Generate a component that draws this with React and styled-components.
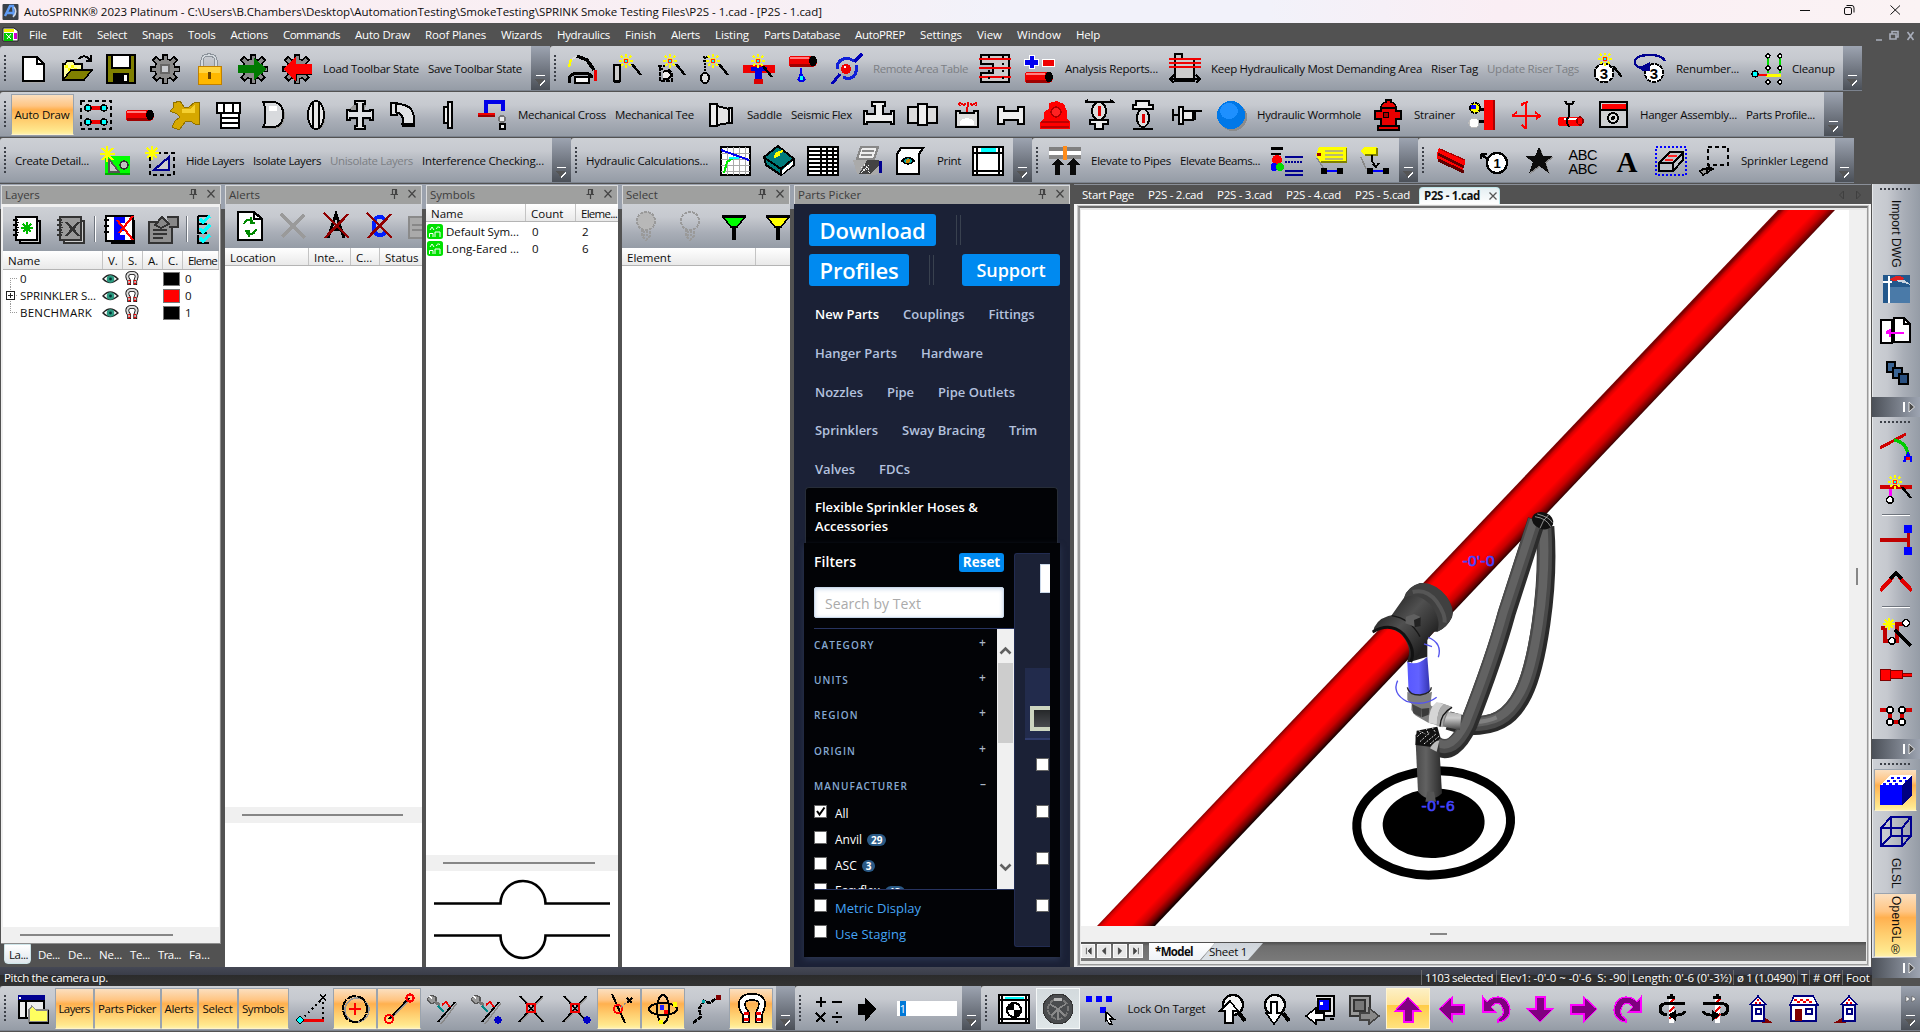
import React, { useLayoutEffect, useRef, useState } from "react";
import styled, { createGlobalStyle, css } from "styled-components";

const Global = createGlobalStyle`
  * { box-sizing: border-box; }
  body { margin: 0; background: #525252; overflow: hidden; }
  #root { font-family: "Open Sans", "Noto Sans", sans-serif; font-size: 11.5px; color: #0c0c0c; }
`;

/* ---------- text that is spaced to fill a given width ---------- */
const FitSpan = styled.span`
  display: inline-block;
  flex: none;
  width: max-content;
  white-space: pre;
`;
function Fit({ w, children }) {
  const ref = useRef(null);
  const [gap, setGap] = useState(0);
  useLayoutEffect(() => {
    const natural = ref.current.getBoundingClientRect().width;
    setGap((w - natural) / String(children).length);
  }, [w, children]);
  return (
    <FitSpan ref={ref} style={{ letterSpacing: gap }}>
      {children}
    </FitSpan>
  );
}

/* ---------- icon drawings: [path, fill, stroke, width, dash] ---------- */
const N = "none";
const K = "#000";
const R = "#f00000";
const c = (x, y, r, q = r) => `M${x - r} ${y}A${r} ${q} 0 1 1 ${x + r} ${y}A${r} ${q} 0 1 1 ${x - r} ${y}Z`;
const spark = (x, y) => [
  [`M${x} ${y - 7}V${y + 7}M${x - 7} ${y}H${x + 7}M${x - 5} ${y - 5}L${x + 5} ${y + 5}M${x + 5} ${y - 5}L${x - 5} ${y + 5}`, N, "#ff0", 1.6, "2.5 1.2"],
  [`M${x - 2} ${y - 2}h4v4h-4z`, "#f22"],
  [`M${x - 1} ${y - 1}h2v2h-2z`, "#0ff"],
];
const wand = (x, y) => [[`M${x} ${y}L${x + 9} ${y + 11}`, N, K, 2.4]];
const gear = [
  ["M16 1V31M1 16H31M5 5L27 27M27 5L5 27", N, K, 6],
  [c(16, 16, 10), "#8a8a8a", K, 1.6],
  ["M16 2.5V29.5M2.5 16H29.5M6.5 6.5L25.5 25.5M25.5 6.5L6.5 25.5", N, "#8a8a8a", 3],
];
const mag = [
  ["M11 30V21L8 16Q4 4 17 4Q30 4 26 16L24 21V30", N, K, 8],
  ["M11 28.5V21L8 16Q4 4 17 4Q30 4 26 16L24 21V28.5", N, "#fff", 4.6],
  ["M9 19h5v3h-5zM21 19h5v3h-5zM9 25h5v3h-5zM21 25h5v3h-5z", R],
];
const pipe = (y) => [[`M3 ${y - 5}H25A5 5 0 0 1 25 ${y + 6}H3Q0 ${y} 3 ${y - 5}Z`, R], [`M3 ${y + 3}H26V${y + 6}H3Z`, "#a00000"], [`M3 ${y - 3}H22`, N, "#ff8080", 1.5], [c(26, y, 4, 5), K]];
const num3 = [[c(14, 20, 9.5), "#fff", K, 2, "4 1"], ["T", 14, 25.5, "3", 15, 700]];
const bulb = (f) => [[c(16, 11, 9, 9), f, "#9a9a9a", 2, "3 1"], ["M12 19V26L16 30L20 26V19", N, "#9a9a9a", 2, "3 1"], ["M13 22H19M13 25H19", N, "#9a9a9a", 1.5, "2 1"]];
const funnel = (f) => [["M5 7H27L19 17H13Z", f, K, 1.5], ["M4 6H28", N, K, 2], ["M16 17V30", N, K, 4]];
const page = (f, s = K) => [["M9 8H29V30H9Z", "#ccc", s, 1.5], ["M5 4H26V27H5Z", f, s, 2], ["M2 7H7M2 12H7M2 17H7M2 22H7", N, s, 2], ["M5 9.5H8M5 14.5H8M5 19.5H8", N, s, 1.5]];
const arr = (d) => [[d, "#c8c8c8"], [d, "#800080", "#ff00ff", 1.2]];
const house = (x) => [[`M${x} 12L${x + 8} 3L${x + 16} 12`, "#fff", "#000080", 1.5], [`M${x + 5} 9h2v2h-2zM${x + 9} 9h2v2h-2zM${x + 7} 6h2v2h-2z`, R], [`M${x + 2} 12H${x + 14}V28H${x + 2}Z`, "#fff", "#000080", 2], [`M${x + 6} 16h5v5h-5z`, "#fff", "#000080", 1.8]];
const tick = (x) => [["M30 10L14 31", N, "#888", 1.4], ["M28 9L11 29", N, K, 1.8], ["M4 2l5 2v5l-5 2-4-5z", "#999", "#555", 1.2], ["M2 3l3 1v3z", "#fff"], ["M8 9l5 3", N, "#777", 3], ["M11 13L17 19", N, "#088", 2], ["M15 12l4-3 4 5", N, R, 1.8], x ? [c(27, 27, 3.6), "#0000c8"] : ["M0 0"]];
const cross = (x) => [["M7 4L29 29M28 4L6 29", N, "#999", 1.4], ["M5 3L28 29M27 3L4 29", N, K, 1.7], ["M12 11h8v8h-8z", N, R, 2], x ? [c(28, 27, 3.6), "#0000c8"] : ["M0 0"]];

const ART = {
  new: [["M7 5H22L28 11V30H7Z", "#aaa"], ["M6 4H20L27 11V28H6Z", "#fff", K, 2], ["M20 4V11H27", N, K, 1.6]],
  open: [["M2 27V11H4L6 8H12L14 11H21V27Z", "#ffff9c", K, 1.6], ["M4 12h3v3h-3zM10 12h3v3h-3zM7 15h3v3h-3zM13 15h3v3h-3z", "#ffff00"], ["M2 27L10 17H31L23 27Z", "#808000", K, 1.6], ["M18 6Q23 0 29 7M30 2V8H25", N, K, 2]],
  save: [["M2 2H30V30H2Z", "#808000", K, 2], ["M7 2H25V15H7Z", "#fff", K, 1.5], ["M8 20H24V30H8Z", K], ["M19 22H22V28H19Z", "#fff"]],
  gear: [...gear, ["M11 11h10v10h-10z", "#666"], ["M13 13h6v6h-6z", "#c8cbd0"]],
  lock: [["M9 15V8Q9 2 16 2Q23 2 23 8V15", N, "#8b929a", 3.4], ["M9 15V8Q9 2 16 2Q23 2 23 8V15", N, "#d5dbe0", 1.2], ["M5 13H28V31H5Z", "#ffb800", "#c08000", 1], ["M6 14H27V20H6Z", "#ffd440"], ["M15 19h3v7h-3z", "#6a4300"]],
  gearG: [...gear, ["M1 12H17V5L30 16L17 27V20H1Z", "#007a00"]],
  gearR: [...gear, ["M31 11H15V4L2 16L15 28V21H31Z", "#f00"], ["M31 21H15V28", N, K, 1]],
  auto: [["M2 14L4 6", N, "#ff0", 2.4], ["M5 6L11 3", N, "#ddd", 2], ["M10 3L20 7L27 17", N, K, 3.5], ["M2 30V25Q5 20 11 20H18Q25 21 25 25", N, K, 3], ["M8 24H22V30H8Z", "#f8f8f8", K, 2], ["M27 17h3v11h-3z", "#e00"]],
  probe: [["M3 12h6v16h-6z", "#ccc", K, 2.4], ["M3 29h6", N, K, 2], ...spark(15, 8), ...wand(21, 11)],
  wiz2: [["M3 13H10M4 16H8M5 14V28H17V20L13 16", N, K, 2, "4 1"], ["M8 19q6-3 8 3q-2 6-8 4", "#eee", K, 2], ...spark(15, 8), ...wand(21, 11)],
  wiz3: [["M4 4h5M4 8h5M6 4v14", N, K, 2, "2 1"], [c(6, 25, 4, 5), "#ddd", K, 2], ...spark(14, 8), ...wand(20, 11)],
  wiz4: [["M0 12H32V20H0Z", R], ["M8 14H24V18H19V26H12V18H8Z", "#0000e0"], ["M11 26h9v5h-9z", "#d00"], ...spark(15, 8), ...wand(20, 13)],
  drip: [...pipe(8), ["M14 15V20", N, "#00f", 2], ["M14 18L19 27Q15 32 10 27Z", "#0000e8"], ["M13 23h3v4h-3z", "#0ff"]],
  orbit: [["M1 31L9 21M23 9L31 1", N, "#0000b8", 3], ["M6 16Q6 6 17 5L23 8M25 12Q27 24 17 26L12 24", N, "#1020d8", 3], [c(15, 16, 5), R], [c(14, 14, 1.5), "#fff"]],
  frame: [["M2 2H30V29H2V20H14V11H2Z", "#ccc", K, 2], ["M0 6H32M0 15H32M0 24H32", N, R, 2], ["M10 3V29M24 3V29", N, K, 1.4, "2 5"]],
  plus: [["M6 2H11V6H15V12H11V15H6V12H1V6H6Z", "#0000f0", "#fff", 1], ["M19 6H31V13H19Z", R, "#fff", 1], ...pipe(24)],
  keep: [["M6 1H13V6H25V28H6Z", "#ccc", K, 2], ["M0 6H32M0 10H32M0 14H32", N, R, 2], ["M2 26H30M5 22L1 26L5 30M27 22L31 26L27 30", N, K, 2.5]],
  renum1: [...num3, ...spark(15, 6), ...wand(23, 13)],
  renum2: [[c(20, 20, 9), "#fff", K, 2, "4 1"], ["T", 20, 25.5, "3", 15, 700], ["M31 8Q28 2 16 2Q1 2 1 9Q1 14 8 15", N, "#000090", 2.4], ["M6 14L16 9V18H8Z", "#000090"]],
  cleanup: [["M18 5V20M30 5V20", N, "#0d0", 2], ["M16 22H31", N, "#ff0", 3], ["M6 22H17", N, "#f00", 2.5], [c(5, 21, 3), "#0ff", K, 1.2], [c(18, 3, 2), "#fff", K, 1.2], [c(30, 3, 2), "#fff", K, 1.2], [c(18, 15, 2), "#fff", K, 1.2], [c(30, 15, 2), "#fff", K, 1.2], [c(18, 29, 2), "#fff", K, 1.2], [c(30, 29, 2), "#fff", K, 1.2]],

  sel: [["M1 2H31V30H1Z", N, K, 2, "4 3"], ["M9 9H23M9 23H23", N, "#e00", 3.5], [c(8, 9, 3), "#0ff", K, 1.4], [c(24, 9, 3), "#0ff", K, 1.4], [c(8, 23, 3), "#0ff", K, 1.4], [c(24, 23, 3), "#0ff", K, 1.4]],
  pipe: pipe(16),
  ytee: [["M5 4L12 2L16 8H21L27 3H31V25H27L22 22H18L11 31L4 28L7 22L12 18L9 15L2 12L5 9Z", "#d6a800", "#8f7000", 1], ["M14 10H22L27 6V14H14Z", "#f5d030"]],
  cap: [["M5 4H28V14H5Z", "#fff", K, 2], ["M12 4V14M21 4V14", N, K, 2], ["M9 14H27V29H9Z", "#fff", K, 2], ["M9 19H27M9 24H27", N, K, 2]],
  plug: [["M9 5H20Q30 8 29 18Q28 28 20 30H9", "#999"], ["M7 3H19Q28 6 27 16Q27 26 19 28H7L9 24V8Z", "#d8dadd", K, 2], ["M13 7H21V12H13Z", "#fff"]],
  disc: [[c(18, 17, 7.5, 14), "#999"], [c(16, 16, 8, 14), "#e8e8e8", K, 2], ["M13 4V28M19 4V28", N, K, 1.5]],
  crossf: [["M12 3H22V6L20 13H27L30 12V22L20 21V28L22 31H12V21H4V12Z", "#999"], ["M11 2H21V5H19V12H26V11H29V21H26V19H19V27H21V30H11V27H13V19H6V21H3V11H6V12H13V5H11Z", "#e2e3e5", K, 2]],
  elbow: [["M3 4H9V5Q25 5 26 19V27H15V22Q15 14 9 14V16H3Z", "#e2e3e5", K, 2], ["M13 25H27M8 5V14", N, K, 2]],
  flange: [["M12 8H16V24H12ZM16 3H20V29H16Z", "#eee", K, 1.8]],
  hook: [["M10 15V3H27V12", N, "#0000e8", 4], ["M2 14H19V18H2Z", R], ["M2 17H19", N, "#900", 2.5], [c(26, 20, 3), "#eee", "#777", 1.5], ["M24 25h5v5h-5z", "#eee", K, 1.5]],
  reducer: [["M5 5H12V27H5Z", "#eee", K, 2], ["M12 7L24 10V24L12 26Z", "#e4e4e4", K, 2], ["M24 9h3v15h-3z", "#eee", K, 1.6]],
  tee: [["M9 3H22V7H20V15H28V12H31V25H28V23H4V25H1V12H4V15H12V7H9Z", "#eee", K, 2]],
  coup: [["M1 8H12V24H1Z", "#ddd", K, 2], ["M20 8H30V24H20Z", "#ddd", K, 2], ["M11 5H20V26H11Z", "#eee", K, 2]],
  flow: [["M7 5H26M9 3V7M13 5V8M17 3V8M21 5V8M25 3V7", N, "#e00", 1.8, "2 1"], ["M16 8V13", N, "#e00", 2], ["M5 12H9V14H23V12H27V28H5Z", "#ddd", K, 2], ["M9 22Q16 16 23 22V26H9Z", "#fff"]],
  red2: [["M3 8H9V12H23V8H29V25H23V21H9V25H3Z", "#eee", K, 2]],
  riser: [["M10 4L18 2L25 5L28 12V20L31 23V30H1V23L5 20V13L10 10Z", "#f00"], [c(17, 13, 5), "#f22", "#a00", 1.5], ["M2 23H30M2 28H30", N, "#b00", 1.5]],
  head1: [["M2 3H30L27 1M5 1L2 3", N, K, 2], [c(16, 12, 7, 9), "#ddd", K, 2], ["M15 7h3v10h-3z", "#d00"], ["M7 21H25V25H20V30H12V25H7Z", "#eee", K, 2]],
  head2: [["M9 2H22V6H26V10H6V6H9Z", "#eee", K, 2], [c(16, 19, 6, 9), "#ddd", K, 2], ["M15 15h3v9h-3z", "#d00"], ["M6 30H26", N, K, 2.4]],
  side: [["M2 10V22M2 16H9", N, K, 2.4], ["M8 8H12V25H8Z", "#eee", K, 2], ["M12 12H22V21H12Z", "#eee", K, 2], ["M22 12H31M24 12V21", N, K, 2]],
  ball: [[c(18, 18, 14, 14), "#8c8c8c"], [c(16, 16, 14, 14), "#0078e8"], [c(14, 12, 9, 8), "#1e90ff"]],
  hydrant: [["M9 9Q9 4 14 3V1H19V3Q24 4 24 9V12H29V20H24V27H27V31H6V27H9V20H3V12H9Z", "#e80000", K, 1.6], [c(14, 16, 3), "#a00", K, 1], ["M8 9H25M8 27H25", N, K, 1.6]],
  hazard: [["M18 1H27V31H18Z", "#f00"], ["M27 1h2v30h-2z", "#a00"], [c(9, 9, 5), "#ff0", K, 2, "3 1"], ["M5 6h5v4h-5z", "#00f"], [c(8, 24, 5), "#fff", "#bbb", 1.2], ["M13 10H18M13 22H18", N, K, 3]],
  move: [["M16 3V30M3 17H30", N, "#f00", 2], ["M12 7V5L18 3M25 13L30 17L26 20M7 13L2 17M16 30L12 26", N, "#f00", 2]],
  hanger: [["M11 2L13 5H18L20 2M15 5V18", N, K, 2.2], ["M5 18H28V27H5Q2 23 5 18Z", "#f00"], ["M10 20H24", N, "#fff", 2], [c(26, 22, 3, 4), "#f00", "#800", 1.5], ["M15 17Q11 22 15 28", N, K, 2]],
  win: [["M2 3H29V28H2Z", "#cfd0d2", K, 2.4], ["M3.5 5H28V10H3.5Z", "#f00"], ["M2 10.5H29", N, K, 2], [c(15, 19, 5), "#ddd", K, 2], [c(15, 19, 2), K]],

  detail: [["M5 11H30V30H5Z", "#0f0"], ["M5 29H30", N, "#0a0", 2], ["M9 14V27H19L9 14", "#c8c8c8", "#555", 1.6], [c(24, 20, 4), "#c0c0c0", "#333", 1.5], ["M7 1V17M0 9H15M2 3L13 15M13 3L2 15", N, "#ff0", 2]],
  detail2: [["M6 8H30V30H6Z", N, K, 2.4, "4 3"], ["M10 25L25 12V25Z", "#ccc", "#000090", 2.2], ["M8 1V15M1 8H15M3 3L13 13M13 3L3 13", N, "#ff0", 2]],
  graph: [["M2 2H31V30H2Z", "#fff", K, 2], ["M8 2V30M14 2V30M20 2V30M26 2V30M2 8H31M2 14H31M2 20H31M2 26H31", N, "#aaa", 1], ["M2 5L30 15", N, "#00e", 2], ["M5 28L8 17L14 13", N, "#0e0", 2], ["M10 13H20", N, "#0ff", 2]],
  book: [["M1 12L15 1L31 14V20L18 30L3 20Z", "#007c7c", K, 2], ["M2 13L18 24V29M18 24L30 14", N, K, 2], ["M19 25L30 16V20L19 29Z", "#fff"], ["M12 9L20 6M11 12L17 9", N, "#ff0", 2.4]],
  table: [["M1 2H31V30H1Z", "#fff", K, 2.4], ["M1 6H31M1 10H31M1 14H31M1 18H31M1 22H31M1 26H31M14 2V30M20 2V30M26 2V30", N, K, 1.8]],
  printer: [["M10 2H27L23 14H6Z", "#eee", "#888", 2], ["M11 6H23M10 10H21", N, "#888", 1.5], ["M2 15H25L31 17V26L24 30L6 29Z", "#aaa"], ["M8 29L16 15H28V20L20 29Z", "#444"], ["M10 22l4 4M13 19l5 6M18 20l-8 8M15 24l4 4", N, "#eee", 1.2, "2 1"], ["M29 16V28", N, "#000090", 3]],
  preview: [["M6 3H28L24 9V29H2V9Z", "#fff", K, 2], ["M7 16Q13 9 19 16Q13 22 7 16Z", "#0aa", K, 1.6], [c(13, 16, 2), "#c80"]],
  sheet: [["M1 2H31V30H1Z", "#fff", K, 2.2], ["M5 2V30M27 2V30M1 8H31M1 26H31", N, K, 2], ["M9 3.2H24V7H9Z", "#0ff"]],
  elev: [["M0 2H32V6H0Z", "#808080"], ["M0 6H32V10H0Z", "#fff"], ["M0 10H32V14H0Z", "#888"], ["M14 1H18V15H14Z", "#ff8c1a"], ["M2 20L9 13L15 20H11V30H6V20ZM17 20L24 13L31 20H27V30H21V20Z", "#0a0a0a"]],
  rgb: [["M0 2h12v3h-12zM0 8h10v2h-10z", K], [c(6, 15, 5), "#f00"], [c(3, 22, 4), "#00f"], [c(9, 22, 4), "#0d0"], ["M14 12H32M14 26H32M14 30H32", N, "#000090", 2.4], ["M14 17H32", N, "#000090", 2, "2 1"]],
  tag1: [["M4 2H32V17H5L1 10Z", "#ff0"], ["M6 17H32V3", N, "#808000", 2], ["M10 6H28M10 10H28M10 14H28", N, "#b8b870", 1.5], ["M2 8h4v3h-4z", "#900"], ["M2 13L9 24", N, "#888", 1.5], ["M9 26H27", N, "#00f", 2.4], ["M6 23h6v6h-6zM22 23h6v6h-6z", K]],
  tag2: [["M5 2H18V10H5L2 6Z", "#ff0"], ["M18 3V10H6", N, "#808000", 2], ["M13 10V16L17 22M14 19L17 22L20 18", N, K, 1.8], ["M2 12L7 24", N, "#888", 1.5], ["M10 26H28", N, "#00f", 2.4], ["M8 23h6v6h-6zM24 23h6v6h-6z", K]],
  beam: [["M4 3L30 15V20L28 21V27L2 14V9Z", "#f00"], ["M3 9L29 22M29 27L3 15", N, "#600000", 3], ["M5 4L30 15", N, "#a00", 1.2]],
  bub: [[c(18, 18, 10), "#fff", K, 2.2], ["T", 18, 23, "1", 13, 700], ["M8 14L2 9M2 9H8M2 9V14", N, K, 2.4]],
  star: [["M17 3L21 12H31L23 18L27 29L17 22L7 29L11 18L3 12H13Z", "#888"], ["M16 2L20 11H30L22 17L26 28L16 21L6 28L10 17L2 11H12Z", "#0c0c0c"]],
  abc: [["T", 16, 14.5, "ABC", 14.5, 400], ["T", 16, 28.5, "ABC", 14.5, 400]],
  A: [["T", 16, 27, "A", 29, 700, "Liberation Serif, serif"]],
  dbox: [["M1 2H31V30H1Z", N, "#0000ff", 2, "2 2"], ["M4 18L15 7H28V15L18 26H4Z", "#bfc3c9", K, 2], ["M4 18H18V26M18 18L28 8", N, K, 2], ["M13 11H22M10 15H18", N, "#f22", 2]],
  lasso: [["M9 2H29V20H9Z", N, K, 2, "4 3"], ["M10 22L1 26L4 30L14 24ZM3 24H13M8 22V29", "#999", K, 1.6]],

  L1: [...page("#fff"), ["M16 9V21M10 15H22M12 11L20 19M20 11L12 19", N, "#0b0", 1.6]],
  L2: [...page("#9a9a9a", "#333"), ["M11 9L24 23M24 9L11 23", N, "#333", 2.4]],
  L3: [["M9 8H31V30H9Z", "#ccc", K, 1.5], ["M3 3H30V28H3Z", "#fff", K, 2], ["M11 4H22V10H17V13H21V18H17V22H22V27H11Z", "#00f"], ["M14 7L30 27M30 3L16 20", N, "#f00", 2.2], ["M1 7H6M1 13H6M1 19H6", N, K, 2]],
  L4: [["M2 9H25V30H2Z", "#909090", "#333", 2], ["M6 17H20M6 21H20M6 25H16", N, "#333", 1.6], ["M8 12L15 4L22 11L14 15ZM20 4H31V14H22", "#888", "#333", 2]],
  L5: [["M3 3H15M3 3V11H12M3 12V20H12M3 22V30H14", N, K, 2], ["M5 6L8 9L15 3M5 15L8 19L15 12M5 25L8 28L15 22", N, "#0ff", 3]],
  A1: [["M4 2H20L28 9V30H4Z", "#fff", K, 2.2], ["M20 2V9H28", N, K, 1.6], ["M10 14Q12 8 19 11M17 7V13H21M22 19Q20 26 12 23M15 27V21H11", N, "#080", 2.2]],
  A2: [["M4 4L28 28M27 5L5 27", N, "#9a9a9a", 3.6]],
  A3: [["M8 28L16 4L24 28M11 19H22", N, K, 3], ["M4 3L29 28M28 4L5 28", N, "#900000", 2.6]],
  A4: [["M22 10Q18 5 13 8Q8 16 13 24Q18 27 23 22", N, "#0020ff", 4], ["M4 3L29 28M28 4L5 28", N, "#900000", 2.6]],
  A5: [["M3 7H24V28H3Z", "#aaa", "#8a8a8a", 2], ["M6 15H20M6 20H20", N, "#888", 1.6]],
  S1: bulb("#b8b8b8"), S2: bulb(N), S3: funnel("#0f0"), S4: funnel("#ff0"),

  panes: [["M1 2H28V8H1Z", "#000090"], ["M2 4h2v2h-2z", "#fff"], ["M2 8H27V25H2Z", "#eee", K, 1.8], ["M9 8V25", N, K, 1.8], ["M12 29V17L15 13L19 17H31V29Z", "#ffff60", "#888", 1.4], ["M12 30H32V17", N, K, 1.8]],
  snapx: [["M6 27L28 5V27", N, K, 2, "2 3"], ["M6 27H29", N, "#e00", 3], ["M1 27L5 23L9 27L5 31Z", "#0ff", K, 1], ["M25 2l6 5M31 2l-6 5", N, K, 1.5]],
  circ: [[c(18, 17, 12), N, "#999", 1.5], [c(16, 16, 12, 13), N, K, 2, "10 1"], ["M16 10V22M10 16H22", N, "#f00", 2.4]],
  endp: [["M8 26L26 7", N, "#999", 1.6], ["M6 26L26 5", N, K, 1.8], [c(27, 5, 3.6), N, "#f00", 2.2], [c(6, 26, 4), N, "#f00", 2.2]],
  t1: tick(0), t2: tick(1), x1: cross(0), x2: cross(1),
  near: [["M9 1L22 30", N, K, 2], [c(15, 16, 4), N, "#f00", 2], ["M18 14L25 8", N, "#888", 2, "2 2"], ["M24 5l5 5M29 5l-5 5", N, K, 1.6]],
  atom: [[c(16, 16, 14, 6), N, K, 2], [c(16, 16, 6, 14), N, K, 2], ["M13 12h4v5h-4z", "#22f"], ["M17 17h4v4h-4z", "#f00"], ["M26 9h4v5h-4zM12 27h4v4h-4z", "#ff0"]],
  poly: [["M2 30L10 24L8 16L13 8L19 10L27 4", N, K, 2.6, "5 1"], ["M11 7h3v3h-3z", "#0aa"], ["M25 2h5v5h-5z", "#800000"]],
  mag,
  calc: [["M9 4V14M4 9H14M20 9H30M4 20L13 29M13 20L4 29M20 24H30M25 19v2M25 28v2", N, K, 2]],
  go: [["M8 12H15V7L24 16L15 26V21H8Z", "#000", K, 2]],
  target: [["M1 2H31V30H1Z", "#fff", K, 2.2], ["M4 2V30M28 2V30M1 7H31M1 26H31", N, K, 1.4], ["M7 3.5H26V6H7Z", "#0ff"], [c(16, 17, 7), "#fff", K, 2], ["M16 10V17H9Q10 11 16 10ZM16 24V17H23Q22 23 16 24Z", K]],
  wheel: [[c(16, 16, 15), "#4a4c4e", "#333", 1], [c(16, 16, 10), N, "#777", 2, "5 2"], ["M16 16V27M8 11L16 16L24 11M9 23L16 16L23 23", N, "#8a8a8a", 1.6], ["M12 5h8v3h-8z", "#b8b8b8"]],
  lockt: [["M0 3h6v6h-6zM10 3h6v6h-6zM20 3h6v6h-6zM14 14h6v6h-6z", "#00f"], ["M20 19L28 26H24L26 31L23 31L21 27L20 28Z", "#fff", K, 1.3]],
  mup: [[c(17, 12, 10), "#f4f4f4", K, 2.2], ["M23 20L29 28", N, K, 4], ["M14 8L22 18H17V30H9V18H4Z", "#fff", K, 1.6]],
  mdn: [[c(15, 12, 10), "#f4f4f4", K, 2.2], ["M23 20L29 28", N, K, 4], ["M14 31L22 20H17V9H11V20H6Z", "#fff", K, 1.6]],
  mon1: [["M12 3H30V23H14", "#e8e8e8", K, 2.4], ["M14 6H26V18H14Z", "#00f", K, 1.4], ["M16 9h3v3h-3z", "#fff"], ["M2 23L12 15V20H20V27H12V31Z", "#fff", K, 1.5], ["M26 26H30", N, K, 2]],
  mon2: [["M2 3H22V23H2Z", "#999", "#333", 2.2], ["M6 7H17V18H6Z", "#777", "#333", 1.4], ["M31 23L21 15V20H12V27H21V31Z", "#888", "#444", 1.5]],
  up: arr("M16 4L29 18H21V29H12V18H3Z"),
  left: arr("M3 16L16 4V12H28V21H16V29Z"),
  ccw: [["M3 4V19H16L11 14Q16 8 21 12Q25 18 22 23L18 26V29Q29 28 30 17Q29 5 18 4Q11 4 7 9Z", "#800080", "#f0f", 1.2]],
  down: arr("M16 29L29 16H21V4H12V16H3Z"),
  right: arr("M29 16L16 4V12H3V21H16V29Z"),
  cw: [["M29 4V19H16L21 14Q16 8 11 12Q7 18 10 23L14 26V29Q3 28 2 17Q3 5 14 4Q21 4 25 9Z", "#800080", "#f0f", 1.2]],
  spin1: [["M15 5V30", N, "#fff", 5], ["M13 11l5-5M13 19l5-5M13 26l5-5", N, "#e00", 2.6], ["M11 4h8M15 1v5", N, K, 3], ["M29 10H14Q4 10 4 16Q4 21 11 22M29 18Q27 23 16 22", N, K, 3], ["M20 17V28L12 22Z", K]],
  spin2: [["M17 5V30", N, "#fff", 5], ["M15 11l5-5M15 19l5-5M15 26l5-5", N, "#e00", 2.6], ["M13 4h8M17 1v5", N, K, 3], ["M3 10H18Q28 10 28 16Q28 21 21 22M3 18Q5 23 16 22", N, K, 3], ["M12 17V28L20 22Z", K]],
  h1: [["M20 24L29 30H18Z", "#800000"], ...house(6)],
  h2: [["M6 3H25L30 12H2Z", "#fff", "#000080", 1.5], ["M6 6h3v2h-3zM12 6h3v2h-3zM18 6h3v2h-3zM9 8h3v2h-3zM15 8h3v2h-3zM21 8h3v2h-3z", R], ["M3 12H28V28H3Z", "#fff", "#000080", 2], ["M7 16h7v12h-7z", "#800000"], ["M18 16h6v5h-6z", "#fff", "#000080", 1.8]],
  h3: [["M12 24L1 30H14Z", "#800000"], ...house(9)],

  dwg: [["M3 2H30V30H3Z", "#23588c"], ["M10 14H30V30H10Z", "#4a7aa8"], ["M9 3V30M3 9H12", N, "#fff", 2.4], ["M10 7Q16 0 24 5L22 8H13Z", "#e02020"], ["M16 8Q24 4 30 12L24 10Z", "#c8d4e0"]],
  pages: [["M1 5H12V28H1Z", "#fff", K, 2], ["M14 3H24L30 9V27H14Z", "#fff", K, 2.2], ["M24 3V9H30", N, K, 1.6], ["M6 18H24M10 14V22M6 18L10 15", N, "#f0f", 2.2]],
  cubes: [["M7 5H15V15H7Z", "#3a6494", K, 2], ["M13 11H22V21H13Z", "#3a6494", K, 2], ["M19 17H28V27H19Z", "#2a5080", K, 2]],
  r1: [["M0 16L26 2", N, "#d00000", 3], ["M14 8Q26 10 28 22", N, "#0c0", 3.2], ["M24 30L28 22L32 30M24 25H32", N, "#00f", 2.4], ["M26 25h4v3h-4z", "#e00"]],
  r2: [["M0 13H32", N, "#d00000", 3.6], ["M10 15V24", N, "#f0f", 3], [c(10, 26, 3.4), "#fff", K, 1.6], ...spark(15, 8), ...wand(22, 13)],
  r3: [["M0 16H28", N, "#c00000", 4], ["M28 6V26", N, "#c00000", 3], ["M24 1h8v8h-8zM24 23h8v8h-8z", "#00f"]],
  r4: [["M0 25L13 11M32 25L19 11", N, "#e00000", 4], ["M10 13L16 7L22 13", N, K, 4]],
  r5: [["M1 12H5V25H17V8H25", N, "#c00000", 3.6], [c(26, 7, 3.4), "#fff", K, 1.6], [c(12, 25, 3.4), "#fff", K, 1.6], ["M9 2V14M3 8H15M5 4L13 12M13 4L5 12", N, "#ff0", 2], ["M15 14L31 30", N, K, 3.4]],
  r6: [["M0 11H10V22H0Z", "#f00", "#800000", 1], ["M10 12H22V20H10Z", "#f00", "#800000", 1], ["M22 15H32V18H22Z", "#f00", "#800000", 1]],
  r7: [["M0 10H10V22H22V10H32", N, "#d00000", 3.6], [c(10, 10, 3.2), "#fff", K, 1.6], [c(10, 22, 3.2), "#fff", K, 1.6], [c(22, 10, 3.2), "#fff", K, 1.6], [c(22, 22, 3.2), "#fff", K, 1.6]],
  solid: [["M0 11L11 1H32L22 11Z", "#fff"], ["M3 9h3v2h-3zM9 9h3v2h-3zM15 9h3v2h-3zM7 6h3v2h-3zM13 6h3v2h-3zM19 6h3v2h-3zM11 3h3v2h-3zM17 3h3v2h-3zM23 3h3v2h-3zM25 6h3v2h-3z", "#00f"], ["M0 11H22V31H0Z", "#0000ff"], ["M22 11L32 1V21L22 31Z", "#000080"]],
  wire: [["M1 12H22V30H1ZM11 1H31V20H11ZM1 12L11 1M22 12L31 1M22 30L31 20M1 30L11 20", N, "#000090", 2]],
};

const Svg = styled.svg`
  display: block;
  flex: none;
`;
function Icon({ name, size = 32 }) {
  return (
    <Svg width={size} height={size} viewBox="0 0 32 32" shapeRendering="crispEdges">
      {ART[name].map((s, i) =>
        s[0] === "T" ? (
          <text key={i} x={s[1]} y={s[2]} textAnchor="middle" fontSize={s[4]} fontWeight={s[5]} fontFamily={s[6] || "Liberation Sans, sans-serif"} textLength={s[3] === "ABC" ? 29 : undefined}>
            {s[3]}
          </text>
        ) : (
          <path key={i} d={s[0]} fill={s[1] || N} stroke={s[2] || N} strokeWidth={s[3] || 1} strokeDasharray={s[4]} />
        )
      )}
    </Svg>
  );
}

/* ---------- toolbars ---------- */
const steel = "#cdd0d5 0%, #c6c9cf 30%, #a9aeb7 65%, #959ca6 100%";
const glow = "#fbdfbf 0%, #ffc583 28%, #ffb04f 38%, #ffcb6c 62%, #ffe88e 92%, #fff0a8 100%";

const ToolRow = styled.div`
  display: flex;
  flex: none;
  height: 46px;
  background: #525252;
`;
const Bar = styled.div`
  display: flex;
  width: ${(p) => p.$w}px;
  height: 45px;
  background: linear-gradient(${steel});
  border-bottom: 1px solid #7c838e;
  border-radius: 3px 3px 0 0;
`;
const Grip = styled.div`
  flex: none;
  width: 2px;
  height: 27px;
  margin: 9px 4.5px 0 4px;
  background: repeating-linear-gradient(#3c4048 0 2px, transparent 2px 4px);
`;
const Cap = styled.div`
  flex: none;
  margin-left: auto;
  width: 19px;
  display: flex;
  flex-direction: column;
  align-items: center;
  justify-content: ${(p) => (p.$more ? "space-between" : "flex-end")};
  padding: 9px 0 3px;
  background: linear-gradient(#9da4b1, #4b5058);
`;
const face = css`
  background: linear-gradient(${glow});
  border: 1px solid #9aa3ae;
  border-bottom-color: #fff3c8;
`;
const pale = css`
  background: linear-gradient(#d3dadd, #dfe6e8);
  border: 1px solid #f5f8f8;
`;
const yellow = css`
  background: linear-gradient(#fdf0c4, #fee39a 40%, #ffcc48 42%, #ffe27e);
  border: 1px solid #fff4d0;
`;
const ToolButton = styled.div`
  flex: none;
  display: flex;
  align-items: center;
  justify-content: center;
  width: ${(p) => p.$w}px;
  height: ${(p) => p.$h || 41}px;
  margin-top: ${(p) => (p.$h ? 0 : 2)}px;
  color: ${(p) => (p.$dim ? "#7c7f84" : "#0c0c0c")};
  ${(p) => p.$face === "on" && face}
  ${(p) => p.$face === "pale" && pale}
  ${(p) => p.$face === "yellow" && yellow}
`;
const I = (icon, f) => ({ icon, w: 44, f });
const T = (text, w, f, tw) => ({ text, w, f, tw: tw || w - 9 });

const CapMark = ({ more }) => (
  <Cap $more={more}>
    {more && (
      <Svg width="12" height="8" viewBox="0 0 12 8"><path d="M1 1L5 4L1 7ZM7 1L11 4L7 7Z" fill="#fff" stroke="#555" strokeWidth=".6" /></Svg>
    )}
    <Svg width="11" height="14" viewBox="0 0 11 14" shapeRendering="crispEdges">
      <path d="M1 2.5H10" stroke="#fff" strokeWidth="1" />
      <path d="M0 6H9L4.5 12Z" fill="#555" />
      <path d="M10 7L5 13" stroke="#fff" strokeWidth="1.2" />
    </Svg>
  </Cap>
);
function Toolbar({ w, items, children, more }) {
  return (
    <Bar $w={w}>
      <Grip />
      {items.map((it, i) => (
        <ToolButton key={i} $w={it.w} $face={it.f} $dim={it.f === "dim"}>
          {it.icon ? <Icon name={it.icon} /> : <Fit w={it.tw}>{it.text}</Fit>}
        </ToolButton>
      ))}
      {children}
      <CapMark more={more} />
    </Bar>
  );
}

const row1 = [
  [550, [..."new open save gear lock gearG gearR".split(" ").map((n) => I(n)), T("Load Toolbar State", 105), T("Save Toolbar State", 103)]],
  [1312, [..."auto probe wiz2 wiz3 wiz4 drip orbit".split(" ").map((n) => I(n)), T("Remote Area Table", 104, "dim"), I("frame"), I("plus"), T("Analysis Reports...", 102), I("keep"), T("Keep Hydraulically Most Demanding Area", 220), T("Riser Tag", 56), T("Update Riser Tags", 101, "dim"), I("renum1"), I("renum2"), T("Renumber...", 72), I("cleanup"), T("Cleanup", 52)]],
];
const row2 = [
  [1843, [T("Auto Draw", 63, "on", 55), ..."sel pipe ytee cap plug disc crossf elbow flange hook".split(" ").map((n) => I(n)), T("Mechanical Cross", 97), T("Mechanical Tee", 88), I("reducer"), T("Saddle", 44), T("Seismic Flex", 70), ..."tee coup flow red2 riser head1 head2 side ball".split(" ").map((n) => I(n)), T("Hydraulic Wormhole", 113), I("hydrant"), T("Strainer", 50), ..."hazard move hanger win".split(" ").map((n) => I(n)), T("Hanger Assembly...", 106), T("Parts Profile...", 78)]],
];
const row3 = [
  [571, [T("Create Detail...", 83), I("detail"), I("detail2"), T("Hide Layers", 67), T("Isolate Layers", 77), T("Unisolate Layers", 92, "dim"), T("Interference Checking...", 131)]],
  [461, [T("Hydraulic Calculations...", 131), ..."graph book table printer preview".split(" ").map((n) => I(n)), T("Print", 33), I("sheet")]],
  [386, [I("elev"), T("Elevate to Pipes", 89), T("Elevate Beams...", 89), I("rgb"), I("tag1"), I("tag2")]],
  [436, [..."beam bub star abc A dbox lasso".split(" ").map((n) => I(n)), T("Sprinkler Legend", 96)]],
];
const Rows = ({ bars }) => (
  <ToolRow>
    {bars.map(([w, items], i) => (
      <Toolbar key={i} w={w} items={items} />
    ))}
  </ToolRow>
);

/* ---------- window chrome ---------- */
const Screen = styled.div`
  width: 1920px;
  height: 1032px;
  overflow: hidden;
  display: flex;
  flex-direction: column;
  background: #525252;
`;
const TitleBar = styled.div`
  flex: none;
  height: 23px;
  display: flex;
  align-items: center;
  padding-left: 2px;
  gap: 5px;
  background: linear-gradient(90deg, #fbeef2, #f8eff4 40%, #f2f2fa 52%, #f2f2fa 66%, #faeef4 78%, #fbf3f4);
`;
const Controls = styled.div`
  margin-left: auto;
  padding: 0 19px 4px 0;
`;
const MenuBar = styled.div`
  flex: none;
  height: 23px;
  display: flex;
  align-items: center;
  gap: 15px;
  padding-left: 2px;
  color: #fff;
`;
const MenuIcon = styled.div`
  width: 12px;
`;
const MENUS = [["File", 18], ["Edit", 20], ["Select", 30], ["Snaps", 31], ["Tools", 27.5], ["Actions", 37.5], ["Commands", 57], ["Auto Draw", 55], ["Roof Planes", 61], ["Wizards", 41], ["Hydraulics", 53], ["Finish", 31], ["Alerts", 29], ["Listing", 34], ["Parts Database", 76], ["AutoPREP", 50], ["Settings", 42], ["View", 25], ["Window", 44], ["Help", 24]];

/* ---------- docked panels ---------- */
const Body = styled.div`
  flex: none;
  display: flex;
  height: 802px;
`;
const Left = styled.div`
  width: 1872px;
  display: flex;
  flex-direction: column;
`;
const Docks = styled.div`
  display: flex;
  height: 783px;
  padding-left: 1px;
  background: linear-gradient(90deg, #9ba2ae 1070px, #525252 1070px) 0 0 / 100% 25px no-repeat #525252;
`;
const Panel = styled.section`
  flex: none;
  width: ${(p) => p.$w}px;
  margin: 1px ${(p) => p.$gap}px 0 0;
  display: flex;
  flex-direction: column;
  background: #fff;
  overflow: hidden;
`;
const PanelHead = styled.header`
  flex: none;
  display: flex;
  align-items: center;
  height: 19px;
  padding: 0 3px 2px;
  line-height: 15px;
  color: #3d3d3d;
  background: #9fa09f;
  border: 1px solid #d9dadb;
  border-bottom: 0;
`;
const HeadMarks = styled(Svg)`
  margin-left: auto;
`;
const PanelTools = styled.div`
  flex: none;
  display: flex;
  align-items: center;
  height: 44px;
  overflow: hidden;
  padding-left: ${(p) => p.$pad}px;
  gap: ${(p) => p.$gap}px;
  background: linear-gradient(${steel});
`;
const Sep = styled.i`
  flex: none;
  width: 2px;
  height: 26px;
  margin: 0 -5px;
  background: #6f757e;
  border-right: 1px solid #fff;
`;
const ColHead = styled.div`
  flex: none;
  display: flex;
  height: ${(p) => p.$h || 18}px;
  background: linear-gradient(#fff, #e9e9e9);
  border-bottom: 1px solid #b4b4b4;
  overflow: hidden;
`;
const Col = styled.div`
  flex: none;
  width: ${(p) => p.$w}px;
  padding-left: ${(p) => p.$pad || 5}px;
  line-height: 20px;
  border-right: 1px solid #c4c4c4;
  white-space: nowrap;
  overflow: hidden;
`;
const Grow = styled.div`
  flex: 1;
  min-height: 0;
`;
const ScrollStrip = styled.div`
  flex: none;
  height: 16px;
  background: #f0f0f0;
  padding: 7px 0 0 ${(p) => p.$x}px;
  &::before {
    content: "";
    display: block;
    width: ${(p) => p.$w}px;
    height: 2px;
    background: #868686;
  }
`;
const LayerInner = styled.div`
  flex: 1;
  display: flex;
  flex-direction: column;
  padding: 3px 1px 0 2px;
  border-right: 1px solid #8d8d8d;
  border-bottom: 1px solid #8d8d8d;
  background: #f0f0f0;
  min-height: 0;
`;
const White = styled.div`
  flex: 1;
  background: #fff;
`;
const LayerRow = styled.div`
  display: grid;
  grid-template-columns: 17px 82px 22px 39px 22px 1fr;
  align-items: center;
  height: 17px;
  white-space: nowrap;
  line-height: 16px;
`;
const Swatch = styled.i`
  display: block;
  width: 17px;
  height: 14px;
  background: ${(p) => p.$c};
  border: 1px solid #777;
`;
const LayerTabs = styled.div`
  flex: none;
  height: 23px;
  display: flex;
  gap: 8px;
  padding-left: 3px;
  background: #525252;
  color: #fff;
  align-items: flex-start;
  line-height: 22px;
`;
const LayerTab = styled.span`
  padding: 0 2px 0 4px;
  height: 20px;
  margin-right: -1px;
  color: #111;
  background: linear-gradient(#fff, #dfe6ec);
  border: 1px solid #cfe6ea;
  border-radius: 0 0 4px 4px;
  line-height: 20px;
`;
const SymbolRow = styled.div`
  display: grid;
  grid-template-columns: 19px 86px 50px 1fr;
  height: 17px;
  margin-top: ${(p) => p.$mt || 0}px;
  align-items: center;
  padding-left: 1px;
`;

const PanelHeader = ({ title }) => (
  <PanelHead>
    {title}
    <HeadMarks width="30" height="12" viewBox="0 0 30 12" fill="none" stroke="#444" strokeWidth="1.2">
      <path d="M4.5 1.5V6.5M8.5 1.5V6.5M4 1.5H9M2.5 6.5H10M6.5 7V11M7.5 2V6" />
      <path d="M20.5 2L27.5 9.5M27.5 2L20.5 9.5" />
    </HeadMarks>
  </PanelHead>
);
const Eye = () => (
  <Svg width="17" height="12" viewBox="0 0 17 12">
    <path d="M1 6Q8 -2 16 6Q8 13 1 6Z" fill="#fff" stroke="#222" strokeWidth="1.4" />
    <circle cx="8.5" cy="6" r="3.8" fill="#2b9a80" />
    <circle cx="8.5" cy="6" r="1.4" fill="#033" />
  </Svg>
);
const Magnet = () => (
  <Svg width="15" height="15" viewBox="0 0 32 32">
    {mag.map((s, i) => <path key={i} d={s[0]} fill={s[1]} stroke={i === 1 ? "#ddd" : s[2] || N} strokeWidth={s[3] || 0} />)}
  </Svg>
);
const Twig = ({ kind }) => (
  <Svg width="17" height="17" viewBox="0 0 17 17" shapeRendering="crispEdges">
    <path d={kind === 0 ? "M7.5 8V17M7 8.5H15" : kind === 1 ? "M7.5 0V17M7 8.5H15" : "M7.5 0V9M7 8.5H15"} stroke="#999" strokeDasharray="1 1" />
    {kind === 1 && <path d="M3.5 4.5h8v8h-8zM5 8.5h5M7.5 6v5" fill="#fff" stroke="#222" />}
  </Svg>
);
const LAYERS = [["0", 6, "#000", "0"], ["SPRINKLER S...", 76, "#f00", "0"], ["BENCHMARK", 72, "#000", "1"]];
const TABS = [["De...", 22], ["De...", 23], ["Ne...", 23], ["Te...", 20], ["Tra...", 23], ["Fa...", 21]];

function LayersPanel() {
  return (
    <Panel $w={220} $gap={4}>
      <PanelHeader title="Layers" />
      <LayerInner>
        <PanelTools $pad={8} $gap={12}>
          <Icon name="L1" /><Icon name="L2" /><Sep /><Icon name="L3" /><Icon name="L4" /><Sep /><Icon name="L5" />
        </PanelTools>
        <ColHead $h={19}>
          <Col $w={100}>Name</Col><Col $w={20}>V.</Col><Col $w={20}>S.</Col><Col $w={20}>A.</Col><Col $w={20}>C.</Col><Col $w={36}><Fit w={29}>Eleme</Fit></Col>
        </ColHead>
        <White>
          {LAYERS.map(([n, w, col, e], i) => (
            <LayerRow key={n}>
              <Twig kind={i} /><Fit w={w}>{n}</Fit><Eye /><Magnet /><Swatch $c={col} />{e}
            </LayerRow>
          ))}
        </White>
        <ScrollStrip $x={17} $w={153} />
      </LayerInner>
      <LayerTabs>
        <LayerTab><Fit w={19}>La...</Fit></LayerTab>
        {TABS.map(([t, w], i) => <Fit key={i} w={w}>{t}</Fit>)}
      </LayerTabs>
    </Panel>
  );
}
const PreviewPane = styled.div`
  flex: none;
  height: ${(p) => p.$h}px;
`;
function AlertsPanel() {
  return (
    <Panel $w={197} $gap={4}>
      <PanelHeader title="Alerts" />
      <PanelTools $pad={9} $gap={11}>
        {["A1", "A2", "A3", "A4", "A5"].map((n) => <Icon key={n} name={n} />)}
      </PanelTools>
      <ColHead>
        <Col $w={84}>Location</Col><Col $w={42}>Inte...</Col><Col $w={29}>C...</Col><Col $w={60}>Status</Col>
      </ColHead>
      <Grow />
      <ScrollStrip $x={17} $w={161} />
      <PreviewPane $h={144} />
    </Panel>
  );
}
const SymIcon = () => (
  <Svg width="16" height="15" viewBox="0 0 16 15">
    <rect width="16" height="15" rx="2.5" fill="#00e000" />
    <path d="M2.500 13V9.500H6V13M8 13V8H13V13M3 6L5 3L7 6M9.500 5Q10 2 13 3.500" fill="none" stroke="#fff" strokeWidth="1" />
  </Svg>
);
function SymbolsPanel() {
  return (
    <Panel $w={192} $gap={4}>
      <PanelHeader title="Symbols" />
      <ColHead><Col $w={100}>Name</Col><Col $w={50}>Count</Col><Col $w={60}><Fit w={36}>Eleme...</Fit></Col></ColHead>
      <SymbolRow $mt={1}><SymIcon /><Fit w={73}>Default Sym...</Fit>0<span>2</span></SymbolRow>
      <SymbolRow><SymIcon /><Fit w={73}>Long-Eared ...</Fit>0<span>6</span></SymbolRow>
      <Grow />
      <ScrollStrip $x={17} $w={152} />
      <PreviewPane $h={96}>
        <Svg width="192" height="96" viewBox="0 0 192 96" fill="none" stroke="#000" strokeWidth="2.6">
          <path d="M8 32.5H74.500A22.500 22.500 0 0 1 119.500 32.5H184" />
          <path d="M8 64.5H74.500A22.500 22.500 0 0 0 119.500 64.5H184" />
        </Svg>
      </PreviewPane>
    </Panel>
  );
}
function SelectPanel() {
  return (
    <Panel $w={168} $gap={4}>
      <PanelHeader title="Select" />
      <PanelTools $pad={8} $gap={12}>
        {["S1", "S2", "S3", "S4"].map((n) => <Icon key={n} name={n} />)}
      </PanelTools>
      <ColHead><Col $w={134}>Element</Col></ColHead>
    </Panel>
  );
}

/* ---------- parts picker ---------- */
const Navy = styled.div`
  flex: 1;
  padding: 10px 10px 10px;
  background: #1b2136;
  color: #b4c1de;
  display: flex;
  flex-direction: column;
`;
const BtnRow = styled.div`
  flex: none;
  display: flex;
  height: 32px;
  margin: 0 0 8px 5px;
`;
const Blue = styled.div`
  width: ${(p) => p.$w}px;
  height: 32px;
  display: flex;
  align-items: center;
  justify-content: center;
  border-radius: 3px;
  background: #008af0;
  color: #fff;
  font-weight: 600;
  font-size: ${(p) => p.$fs || 22}px;
`;
const Bars = styled.i`
  width: 5px;
  height: 30px;
  margin: 1px 28px 0 20px;
  border: solid #39414f;
  border-width: 0 1px;
`;
const Navs = styled.div`
  flex: none;
  padding-top: 1px;
`;
const Nav = styled.nav`
  display: flex;
  gap: 24px;
  height: 38.7px;
  padding-left: 11px;
  align-items: center;
  line-height: 18px;
  font-size: 13px;
  font-weight: 600;
`;
const White1 = styled.b`
  color: #fff;
  font-weight: 600;
`;
const PartTitle = styled.div`
  flex: none;
  width: 253px;
  height: 56px;
  margin: -1.5px 0 0 1px;
  padding: 10px 10px 0 9px;
  background: #020306;
  border: 1px solid #272d38;
  border-bottom: 0;
  border-radius: 4px 4px 0 0;
  color: #fff;
  font-size: 13px;
  font-weight: 600;
  line-height: 19px;
`;
const PartBox = styled.div`
  flex: none;
  display: flex;
  width: 256px;
  height: 414px;
  padding: 10px 10px;
  background: #020306;
  box-shadow: 0 3px 6px #2b3550;
`;
const Filters = styled.div`
  width: 200px;
`;
const FilterHead = styled.div`
  display: flex;
  height: 19px;
  width: 190px;
  justify-content: space-between;
  align-items: flex-start;
  font-size: 14px;
  line-height: 17px;
`;
const Reset = styled.span`
  width: 45px;
  height: 19px;
  line-height: 18px;
  text-align: center;
  border-radius: 3px;
  background: #008af0;
  color: #fff;
  font-weight: 700;
  font-size: 13.5px;
`;
const Search = styled.div`
  width: 190px;
  height: 31px;
  margin-top: 15px;
  padding-left: 10px;
  line-height: 31px;
  border: 1px solid #cbd9ea;
  border-radius: 2px;
  background: #fff;
  box-shadow: inset 0 1px 4px #c8d8ec;
  color: #aaa;
  font-size: 14px;
`;
const FilterScroll = styled.div`
  display: flex;
  height: 262px;
  margin: 10px 0 9px;
  border: solid #27335f;
  border-width: 1px 0;
  overflow: hidden;
`;
const FilterList = styled.div`
  width: 183px;
`;
const Cat = styled.div`
  display: flex;
  justify-content: space-between;
  height: 35.2px;
  padding: 9px 10px 0 0;
  font-size: 10px;
  font-weight: 600;
  letter-spacing: 1.1px;
  line-height: 14px;
  color: #86a9d2;
  & > i {
    font-style: normal;
    font-size: 12px;
    line-height: 10px;
    color: #a8b4c4;
  }
`;
const Check = styled.div`
  display: flex;
  height: ${(p) => p.$h || 26}px;
  overflow: hidden;
  gap: 8px;
  color: ${(p) => p.$c || "#fff"};
  font-size: ${(p) => p.$fs || 12}px;
  line-height: ${(p) => (p.$h ? 16 : 18)}px;
`;
const Box = styled.i`
  flex: none;
  width: 13px;
  height: 13px;
  background: #fff;
  border: 1px solid #666;
`;
const Badge = styled.span`
  height: 12px;
  margin: 3px 0 0 -3px;
  padding: 0 4px;
  border-radius: 6px;
  background: #2a5a86;
  font-size: 10px;
  font-weight: 700;
  line-height: 12px;
`;
const VScroll = styled.div`
  width: 17px;
  background: #f0f0f0;
  display: flex;
  flex-direction: column;
  align-items: center;
  padding: 17px 0;
`;
const Thumb = styled.i`
  width: 15px;
  height: 80px;
  margin-top: 8px;
  margin-bottom: auto;
  background: #cdcdcd;
`;
const Results = styled.div`
  width: 36px;
  height: 394px;
  padding-top: 10px;
  background: #1b2136;
  border: 1px solid #222c52;
  border-right: 0;
  border-radius: 3px 0 0 3px;
  display: flex;
  flex-direction: column;
  align-items: flex-end;
`;
const ResultInput = styled.i`
  width: 10px;
  height: 31px;
  background: #fff;
  border: 1px solid #cbd9ea;
  border-right: 0;
`;
const ResultRow = styled.div`
  width: 25px;
  height: 74px;
  margin: 75px 0 18px;
  padding: 38px 0 0 5px;
  background: #222b4c;
  border-bottom: 2px solid #303c6c;
  & > i {
    display: block;
    height: 25px;
    background: linear-gradient(#26282a, #484a4e);
    border: 4px solid #cdd5c0;
    border-right: 0;
  }
`;
const ResultBox = styled(Box)`
  margin: 0 1px 34px 0;
`;
const Chevron = ({ d }) => (
  <Svg width="13" height="9" viewBox="0 0 13 9"><path d={d} fill="none" stroke="#606060" strokeWidth="2.6" /></Svg>
);
const NAV = [[["Couplings", 61.5], ["Fittings", 46]], [["Hanger Parts", 82], ["Hardware", 62]], [["Nozzles", 48], ["Pipe", 27], ["Pipe Outlets", 77]], [["Sprinklers", 63], ["Sway Bracing", 83], ["Trim", 28]], [["Valves", 40], ["FDCs", 31]]];

function PartsPanel() {
  return (
    <Panel $w={276} $gap={4}>
      <PanelHeader title="Parts Picker" />
      <Navy>
        <BtnRow><Blue $w={127}><Fit w={106}>Download</Fit></Blue><Bars /></BtnRow>
        <BtnRow><Blue $w={100}><Fit w={79}>Profiles</Fit></Blue><Bars /><Blue $w={98} $fs={18}><Fit w={69}>Support</Fit></Blue></BtnRow>
        <Navs>
          {NAV.map((r, i) => (
            <Nav key={i}>
              {i === 0 && <White1><Fit w={64}>New Parts</Fit></White1>}
              {r.map(([t, w]) => <Fit key={t} w={w}>{t}</Fit>)}
            </Nav>
          ))}
        </Navs>
        <PartTitle><Fit w={163}>Flexible Sprinkler Hoses &amp;</Fit><Fit w={73}>Accessories</Fit></PartTitle>
        <PartBox>
          <Filters>
            <FilterHead><White1><Fit w={42}>Filters</Fit></White1><Reset>Reset</Reset></FilterHead>
            <Search><Fit w={96}>Search by Text</Fit></Search>
            <FilterScroll>
              <FilterList>
                {["CATEGORY", "UNITS", "REGION", "ORIGIN"].map((t) => <Cat key={t}>{t}<i>+</i></Cat>)}
                <Cat>MANUFACTURER<i>–</i></Cat>
                <Check>
                  <Box><Svg width="11" height="11" viewBox="0 0 11 11"><path d="M2 5L4.500 8.500L9.500 1.500" fill="none" stroke="#000" strokeWidth="2" /></Svg></Box>All
                </Check>
                <Check><Box />Anvil<Badge>29</Badge></Check>
                <Check><Box />ASC<Badge>3</Badge></Check>
                <Check $h={6}><Box />Easyflex<Badge>13</Badge></Check>
              </FilterList>
              <VScroll><Chevron d="M1.500 7.500L6.500 2.500L11.500 7.500" /><Thumb /><Chevron d="M1.500 1.500L6.500 6.500L11.500 1.500" /></VScroll>
            </FilterScroll>
            <Check $c="#45a5f5" $fs={13}><Box /><Fit w={86}>Metric Display</Fit></Check>
            <Check $c="#45a5f5" $fs={13}><Box /><Fit w={71}>Use Staging</Fit></Check>
          </Filters>
          <Results>
            <ResultInput /><ResultRow><i /></ResultRow>
            <ResultBox /><ResultBox /><ResultBox /><ResultBox />
          </Results>
        </PartBox>
      </Navy>
    </Panel>
  );
}

/* ---------- drawing document ---------- */
const Doc = styled.section`
  flex: none;
  width: 797px;
  display: flex;
  flex-direction: column;
`;
const DocTabs = styled.div`
  flex: none;
  display: flex;
  align-items: flex-end;
  height: 20px;
  gap: 14px;
  padding-left: 8px;
  color: #fff;
  line-height: 18px;
  border-top: 1px solid #8a8f98;
`;
const DocTab = styled.div`
  display: flex;
  gap: 9px;
  width: 81px;
  margin-left: -5px;
  padding-left: 4px;
  align-items: center;
  height: 17px;
  color: #111;
  font-weight: 700;
  background: linear-gradient(#e4eef2, #fff);
  border: 1px solid #bfe6ea;
  border-bottom: 0;
  border-radius: 4px 4px 0 0;
`;
const Frame = styled.div`
  flex: 1;
  display: flex;
  flex-direction: column;
  border: solid #f6f6f6;
  border-width: 2px 3px 2px 4px;
`;
const Frame2 = styled.div`
  flex: 1;
  display: flex;
  flex-direction: column;
  border: 1px solid #9a9a9a;
  border-top: 2px solid #6e6e6e;
  border-left-width: 2px;
  outline: 1px solid #c8c8c8;
  padding: 2px 1px 0;
  background: #e9e9e9;
`;
const CanvasRow = styled.div`
  display: flex;
  height: 716px;
`;
const Canvas = styled.svg`
  display: block;
  flex: none;
  width: 768px;
  height: 716px;
  background: #fff;
`;
const VStrip = styled.div`
  flex: 1;
  background: #f0f0f0;
  padding: 358px 0 0 7px;
  &::before {
    content: "";
    display: block;
    width: 2px;
    height: 17px;
    background: #868686;
  }
`;
const SheetBar = styled.div`
  flex: none;
  height: 19px;
  display: flex;
  gap: 2px;
  background: linear-gradient(#4c4c4c, #6e6e6e 4px, #7a7a7a);
  padding-top: 2px;
`;
const NavBtn = styled.span`
  width: 14px;
  height: 14px;
  display: flex;
  align-items: center;
  justify-content: center;
  background: #e8e8e8;
  border: 1px solid #fafafa;
`;
const Sheet = styled.span`
  height: 17px;
  line-height: 17px;
  padding-left: ${(p) => p.$pad}px;
  width: ${(p) => p.$w}px;
  margin: -1px -20px 0 4px;
  font-weight: ${(p) => (p.$on ? 700 : 400)};
  background: ${(p) => (p.$on ? "linear-gradient(#fff,#eef2f6)" : "linear-gradient(#cfd4da,#dde3e8)")};
  clip-path: polygon(${(p) => (p.$on ? "0 0" : "14px 0")}, 100% 0, calc(100% - 15px) 100%, 0 100%);
`;

function Model() {
  return (
    <Canvas viewBox="1081 210 768 716">
      <defs>
        <linearGradient id="red" gradientUnits="userSpaceOnUse" x1="1321" y1="690.7" x2="1351" y2="719.4">
          <stop offset="0" stopColor="#7a0000" /><stop offset="0.08" stopColor="#d80000" /><stop offset="0.16" stopColor="#ff0000" />
          <stop offset="0.6" stopColor="#ff0000" /><stop offset="0.78" stopColor="#c80000" /><stop offset="0.92" stopColor="#680000" /><stop offset="1" stopColor="#180000" />
        </linearGradient>
        <linearGradient id="blk" gradientUnits="userSpaceOnUse" x1="225" y1="370" x2="345" y2="480">
          <stop offset="0" stopColor="#303030" /><stop offset="0.35" stopColor="#505050" /><stop offset="0.7" stopColor="#363636" /><stop offset="1" stopColor="#1c1c1c" />
        </linearGradient>
        <linearGradient id="blu" x1="0" x2="1"><stop offset="0" stopColor="#5858ff" /><stop offset="0.5" stopColor="#6262ff" /><stop offset="1" stopColor="#3434b0" /></linearGradient>
        <linearGradient id="gry" x1="0" x2="1"><stop offset="0" stopColor="#484848" /><stop offset="0.4" stopColor="#626262" /><stop offset="1" stopColor="#2a2a2a" /></linearGradient>
        <linearGradient id="lt" x1="0" x2="0" y2="1" y1="0"><stop offset="0" stopColor="#aaa" /><stop offset="0.4" stopColor="#ccc" /><stop offset="1" stopColor="#444" /></linearGradient>
      </defs>
      <path d="M1778 210H1835L1155 926H1097Z" fill="url(#red)" />
      <g transform="translate(1320 480) scale(.3333)">
        <ellipse cx="341" cy="1029" rx="231" ry="156" fill="none" stroke="#000" strokeWidth="27" transform="rotate(-4 341 1029)" />
        <ellipse cx="341" cy="1030" rx="153" ry="104" fill="#000" transform="rotate(-3 341 1030)" />
        <g fill="none">
          <path d="M675 140C690 330 650 560 610 640S520 740 440 738L385 722" stroke="#2a2a2a" strokeWidth="56" />
          <path d="M672 140C684 330 644 560 604 638S520 734 440 732L385 716" stroke="#4a4a4a" strokeWidth="44" />
          <path d="M670 140C682 330 642 560 602 636S520 730 440 728L385 712" stroke="#636363" strokeWidth="26" />
          <path d="M530 712Q490 730 440 724L400 712" stroke="#808080" strokeWidth="12" />
          <path d="M650 120L560 400C530 510 490 620 445 735Q400 830 350 800" stroke="#2c2c2c" strokeWidth="54" />
          <path d="M645 120L554 400C524 510 484 620 440 733Q398 822 350 790" stroke="#4c4c4c" strokeWidth="42" />
          <path d="M642 120L550 400C520 510 480 620 437 730Q394 816 350 786" stroke="#626262" strokeWidth="24" />
        </g>
        <path d="M350 690L424 702L420 750L350 736Z" fill="url(#lt)" />
        <ellipse cx="668" cy="122" rx="33" ry="25" fill="#111" transform="rotate(20 668 122)" />
        <path d="M645 110Q680 115 692 140M652 102Q690 112 697 128M660 145Q668 120 686 104" stroke="#ccc" strokeWidth="2" fill="none" />
        <path d="M286 765Q322 735 356 765L366 940Q330 975 294 935Z" fill="url(#gry)" />
        <path d="M286 795L290 752L352 740L362 775L330 800Z" fill="#111" />
        <path d="M292 770l14-14M300 785l30-28M312 792l36-30M330 792l28-24M296 752l20 10M318 744l8 20M336 742l10 14" stroke="#ddd" strokeWidth="3" strokeDasharray="6 4" />
        <path d="M330 805Q345 780 358 782L350 815Z" fill="#bbb" />
        <path d="M316 965h32l-6 -30h-20z" fill="#555" />
        <path d="M275 490L322 470V530L262 548Z" fill="#222" />
        <path d="M262 545Q290 560 322 530L330 636Q300 652 266 640Z" fill="url(#blu)" />
        <path d="M262 635Q295 655 336 635L332 668Q330 690 360 668L398 682Q380 690 370 740L325 728Q300 715 285 705L274 690L275 672L262 660Z" fill="#7e7e7e" />
        <path d="M262 622Q266 645 300 645Q334 640 334 622" fill="none" stroke="#222" strokeWidth="4" />
        <path d="M276 672L305 686L304 712L280 700Z" fill="#444" /><path d="M305 686L328 684L326 704L306 712Z" fill="#3a3a3a" />
        <path d="M350 666L372 672Q350 690 352 734L326 728Q325 685 350 666Z" fill="#d6d6d6" />
        <path d="M372 672L396 680Q370 700 368 742L350 738Q350 690 372 672Z" fill="#aaa" />
        <path d="M396 682Q362 700 360 740" fill="none" stroke="#111" strokeWidth="4" />
        <path d="M252 353Q262 320 300 309Q345 306 380 350Q405 385 396 412Q380 445 352 455L340 455L310 495Q300 540 262 545Q280 500 240 460Q200 430 158 458Q165 420 205 408L215 406Z" fill="url(#blk)" />
        <path d="M253 353Q262 322 300 310Q345 306 380 350Q403 385 396 412Q380 445 352 455Q365 415 330 372Q290 335 253 353Z" fill="#404040" />
        <path d="M278 336Q320 325 350 365Q378 405 374 428" fill="none" stroke="#565656" strokeWidth="12" />
        <path d="M215 407Q270 415 300 470" fill="none" stroke="#161616" strokeWidth="4" />
        <path d="M158 456Q210 425 250 462Q290 510 272 546" fill="none" stroke="#111" strokeWidth="9" />
        <path d="M258 410L282 402L300 410L302 436L284 440L256 430Z" fill="#606060" /><path d="M282 420L302 412V438L284 442Z" fill="#222" />
        <g fill="none" stroke="#5555ee" strokeWidth="4">
          <path d="M325 472Q368 490 355 532M312 492L336 500" /><path d="M233 602Q215 640 260 664Q315 680 350 652" />
        </g>
      </g>
      <g fill="#4444ff" stroke="#4444ff" strokeWidth=".6" fontFamily="Liberation Sans, sans-serif" fontSize="15.500">
        <text x="1462.500" y="566" textLength="32">-0'-0</text>
        <text x="1421.500" y="811" textLength="33">-0'-6</text>
      </g>
    </Canvas>
  );
}
const DOCS = [["Start Page", 52], ["P2S - 2.cad", 55], ["P2S - 3.cad", 55], ["P2S - 4.cad", 55], ["P2S - 5.cad", 55]];
function Document() {
  return (
    <Doc>
      <DocTabs>
        {DOCS.map(([t, w]) => <Fit key={t} w={w}>{t}</Fit>)}
        <DocTab><Fit w={56}>P2S - 1.cad</Fit>
          <Svg width="8" height="8" viewBox="0 0 8 8"><path d="M.5 .5L7.5 7.5M7.5 .5L.5 7.5" stroke="#555" strokeWidth="1.3" /></Svg>
        </DocTab>
        <HeadMarks width="36" height="16" viewBox="0 0 36 16" fill="none" stroke="#3f3f3f"><path d="M8.500 3V11L4.500 7ZM21.500 3V11L25.500 7Z" /></HeadMarks>
      </DocTabs>
      <Frame>
        <Frame2>
          <CanvasRow><Model /><VStrip /></CanvasRow>
          <ScrollStrip $x={349} $w={17} />
          <SheetBar>
            {["M3 1V9M9 1V9L5 5Z", "M7 1V9L3 5Z", "M3 1V9L7 5Z", "M2 1V9L6 5ZM8 1V9"].map((d) => (
              <NavBtn key={d}><Svg width="8" height="8" viewBox="0 0 10 10"><path d={d} fill="#444" stroke="#444" strokeWidth="1" /></Svg></NavBtn>
            ))}
            <Sheet $on $pad={6} $w={66}><Fit w={38}>*Model</Fit></Sheet>
            <Sheet $pad={8} $w={62}><Fit w={38}>Sheet 1</Fit></Sheet>
          </SheetBar>
        </Frame2>
      </Frame>
    </Doc>
  );
}

/* ---------- status bar ---------- */
const Status = styled.div`
  flex: none;
  display: flex;
  align-items: center;
  height: 19px;
  padding: 1px 0 0 4px;
  color: #fff;
  background: linear-gradient(#454855, #3a3d49 8px, #2b2b2b 8px, #333);
`;
const Cells = styled.div`
  display: flex;
  margin-left: auto;
`;
const Cell = styled.span`
  width: ${(p) => p.$w}px;
  padding-left: 3px;
  border-left: 1px solid #6a6a6a;
  white-space: pre;
`;
const CELLS = [["1103 selected", 75, 68], ["Elev1: -0'-0 ~ -0'-6  S: -90", 132, 126], ["Length: 0'-6 (0'-3½)", 105, 100], ["ø 1 (1.0490)", 64, 58], ["T", 12, 6], ["# Off", 33, 27], ["Foot", 30, 24]];

/* ---------- right tool column ---------- */
const Side = styled.div`
  width: 48px;
  display: flex;
  flex-direction: column;
`;
const SideBar = styled.div`
  flex: none;
  height: ${(p) => p.$h}px;
  display: flex;
  flex-direction: column;
  align-items: center;
  padding-right: 2px;
  background: linear-gradient(90deg, ${steel});
  border-left: 1px solid #e6e8ea;
`;
const SideGrip = styled.i`
  flex: none;
  width: 31px;
  height: 2px;
  margin: 4px 0;
  background: repeating-linear-gradient(90deg, #3c4048 0 2px, transparent 2px 4px);
`;
const SideCap = styled.div`
  flex: none;
  height: 20px;
  display: flex;
  align-items: center;
  justify-content: flex-end;
  padding-right: 4px;
  background: linear-gradient(90deg, #4b5058, #9da4b1);
`;
const SideSep = styled.i`
  flex: none;
  width: 28px;
  height: 2px;
  margin: 3px 0;
  background: #6f757e;
  border-bottom: 1px solid #fff;
`;
const SideText = styled.div`
  flex: none;
  display: flex;
  align-items: center;
  justify-content: center;
  width: 43px;
  height: ${(p) => p.$h}px;
  padding-top: ${(p) => p.$pt || 0}px;
  ${(p) => p.$on && face}
  & > b {
    writing-mode: vertical-rl;
    font: 400 12px "Liberation Sans", sans-serif;
    letter-spacing: ${(p) => p.$ls || 0}px;
  }
`;
const SideIcon = ({ name, f }) => <ToolButton $w={43} $h={42} $face={f}><Icon name={name} /></ToolButton>;
const SideCapMark = () => (
  <SideCap><Svg width="14" height="12" viewBox="0 0 14 12"><path d="M2 1V11" stroke="#fff" strokeWidth="2" /><path d="M7 1L12.500 6L7 11Z" fill="#4a4a4a" stroke="#fff" strokeWidth=".8" /></Svg></SideCap>
);

const ValueBox = styled.div`
  width: 60px;
  height: 15px;
  margin: 15px 0 0 13px;
  padding: 1px 0 0 3px;
  background: #fff;
  line-height: 13px;
  & > b {
    font-weight: 400;
    background: #0078d7;
    color: #fff;
  }
`;
const bottom1 = [I("panes"), T("Layers", 39, "on", 31), T("Parts Picker", 67, "on", 58), T("Alerts", 37, "on", 29), T("Select", 40, "on", 30), T("Symbols", 51, "on", 42), I("snapx"), I("circ", "on"), I("endp", "on"), I("t1"), I("t2"), I("x1"), I("x2"), I("near", "on"), I("atom", "on"), I("poly"), I("mag", "on")];
const bottom3 = [I("target"), I("wheel", "pale"), I("lockt"), T("Lock On Target", 86, "", 78), I("mup"), I("mdn"), I("mon1"), I("mon2"), I("up", "yellow"), ..."left ccw down right cw spin1 spin2 h1 h2 h3".split(" ").map((n) => I(n))];

export default function App() {
  return (
    <Screen>
      <Global />
      <TitleBar>
        <Svg width="17" height="16" viewBox="0 0 17 16">
          <rect x=".5" width="16" height="16" rx="1" fill="#3b4047" />
          <path d="M3 12L8 2H11L12 12M5 9H12" fill="none" stroke="#5f9bf5" strokeWidth="2.4" /><path d="M12 3Q16 8 11 13" fill="none" stroke="#cfd6e0" strokeWidth="1.500" />
        </Svg>
        <Fit w={798}>{"AutoSPRINK® 2023 Platinum - C:\\Users\\B.Chambers\\Desktop\\AutomationTesting\\SmokeTesting\\SPRINK Smoke Testing Files\\P2S - 1.cad - [P2S - 1.cad]"}</Fit>
        <Controls>
          <Svg width="104" height="12" viewBox="0 0 104 12" fill="none" stroke="#111">
            <path d="M3 6.500H13" /><rect x="47.500" y="3.500" width="7" height="7" rx="1.500" /><path d="M49.500 1.500H55Q57 1.500 57 4V8.500" /><path d="M93.500 1.500L103 10.500M103 1.500L93.500 10.500" />
          </Svg>
        </Controls>
      </TitleBar>
      <MenuBar>
        <MenuIcon>
          <Svg width="17" height="15" viewBox="0 0 17 15"><path d="M1 1H12L16 4V14H1Z" fill="#fff" stroke="#222" /><path d="M2 2h10v3h-10z" fill="#ee0" /><path d="M2 6h9v8h-9z" fill="#0c0" /><path d="M4 7L9 12M9 7L5 12" stroke="#fff" /><path d="M12 6h3v6h-3z" fill="#c0c" /></Svg>
        </MenuIcon>
        {MENUS.map(([m, w]) => <Fit key={m} w={w}>{m}</Fit>)}
        <HeadMarks width="46" height="14" viewBox="0 0 46 14" fill="none" stroke="#a9aebb" strokeWidth="1.600">
          <path d="M2 12H8M16 6H22V11H16ZM18 6V3.500H24V9H22M33.500 4L39.500 12M39.500 4L33.500 12" />
        </HeadMarks>
      </MenuBar>
      <Rows bars={row1} />
      <Rows bars={row2} />
      <Rows bars={row3} />
      <Body>
        <Left>
          <Docks>
            <LayersPanel /><AlertsPanel /><SymbolsPanel /><SelectPanel /><PartsPanel /><Document />
          </Docks>
          <Status>
            <Fit w={104}>Pitch the camera up.</Fit>
            <Cells>{CELLS.map(([t, w, tw]) => <Cell key={t} $w={w}><Fit w={tw}>{t}</Fit></Cell>)}</Cells>
          </Status>
        </Left>
        <Side>
          <SideBar $h={213}>
            <SideGrip /><SideText $h={74} $ls={0.1} $pt={5}><b>Import DWG</b></SideText><SideIcon name="dwg" /><SideIcon name="pages" /><SideIcon name="cubes" />
          </SideBar>
          <SideCapMark />
          <SideBar $h={322}>
            <SideGrip /><SideIcon name="r1" /><SideIcon name="r2" /><SideSep /><SideIcon name="r3" /><SideIcon name="r4" /><SideSep /><SideIcon name="r5" /><SideIcon name="r6" /><SideIcon name="r7" />
          </SideBar>
          <SideCapMark />
          <SideBar $h={199}>
            <SideGrip /><SideIcon name="solid" f="on" /><SideIcon name="wire" /><SideText $h={40}><b>GLSL</b></SideText><SideText $h={64} $on $ls={0.2} $pt={3}><b>OpenGL®</b></SideText>
          </SideBar>
          <SideCapMark />
        </Side>
      </Body>
      <ToolRow>
        <Toolbar w={795} items={bottom1} />
        <Toolbar w={186} items={[I("calc"), { icon: "go", w: 34 }]}><ValueBox><b>1</b></ValueBox></Toolbar>
        <Toolbar w={939} items={bottom3} more />
      </ToolRow>
    </Screen>
  );
}
